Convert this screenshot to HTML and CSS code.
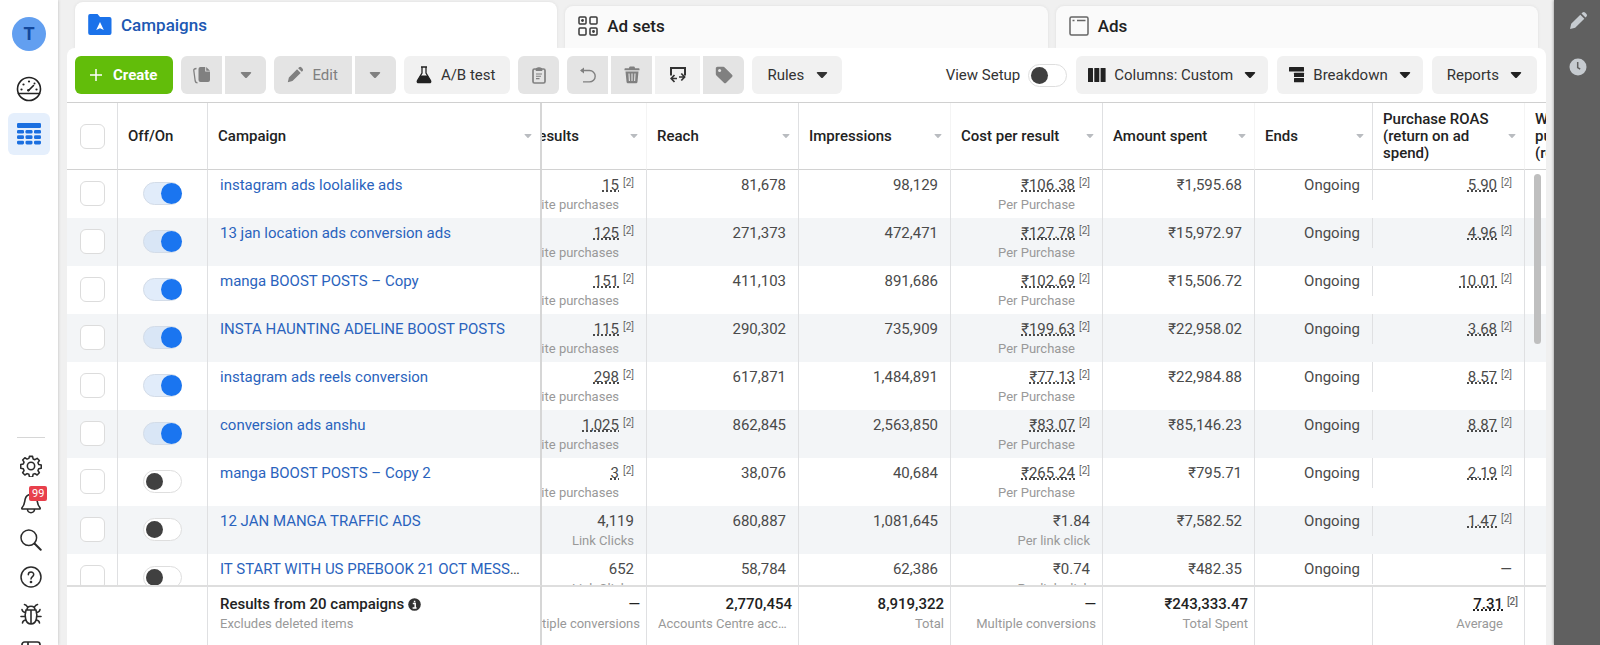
FILE: index.html
```html
<!DOCTYPE html>
<html lang="en">
<head>
<meta charset="utf-8">
<title>Campaigns</title>
<link rel="stylesheet" href="styles.css">
</head>
<body>
<svg class="sprite" aria-hidden="true">
  <symbol id="caret" viewBox="0 0 12 8"><path d="M1.6 1h8.8c.8 0 1.1.8.6 1.3L6.8 6.7c-.5.5-1.1.5-1.6 0L1 2.3C.5 1.8.8 1 1.6 1z" fill="currentColor"/></symbol>
  <symbol id="pencil" viewBox="0 0 20 20"><path d="M2 18l1.200-5.200L12.300 3.700l4 4L7.200 16.800zM13.500 2.500l1-1a1.800 1.800 0 0 1 2.500 0l1.500 1.500a1.800 1.800 0 0 1 0 2.500l-1 1z" fill="currentColor"/></symbol>
</svg>
<div class="app">
  <nav class="sidebar" aria-label="Account">
    <button class="avatar" type="button">T</button>
    <a class="side-link" href="#overview" aria-label="Account overview">
      <svg width="26" height="26" viewBox="0 0 26 26" fill="none" stroke="#222" stroke-width="1.600"><circle cx="13" cy="13" r="11.500"/><path d="M2.500 17.500h21M12.500 14.500l5-5" stroke-linecap="round"/><circle cx="12.300" cy="14.300" r="1.200" fill="#222" stroke="none"/><g fill="#222" stroke="none"><circle cx="5.500" cy="13.500" r="1.100"/><circle cx="7.500" cy="8.500" r="1.100"/><circle cx="13" cy="5.500" r="1.100"/><circle cx="18.500" cy="7.500" r="1"/><circle cx="20.500" cy="13.500" r="1.100"/></g></svg>
    </a>
    <a class="side-link current" href="#campaigns" aria-label="Campaigns">
      <svg width="26" height="24" viewBox="0 0 26 24" fill="#1b6fe0"><rect x="1" y="1" width="24" height="5" rx="1.200"/><g><rect x="1" y="8" width="7" height="3.500" rx="1.300"/><rect x="9.500" y="8" width="7" height="3.500" rx="1.300"/><rect x="18" y="8" width="7" height="3.500" rx="1.300"/><rect x="1" y="13.300" width="7" height="3.700" rx="1.300"/><rect x="9.500" y="13.300" width="7" height="3.700" rx="1.300"/><rect x="18" y="13.300" width="7" height="3.700" rx="1.300"/><rect x="1" y="18.700" width="7" height="3.700" rx="1.300"/><rect x="9.500" y="18.700" width="7" height="3.700" rx="1.300"/><rect x="18" y="18.700" width="7" height="3.700" rx="1.300"/></g></svg>
    </a>
    <div class="side-tools">
      <a class="tool" href="#settings" aria-label="Settings"><svg width="22" height="22" viewBox="0 0 24 24" fill="none" stroke="#2b2b2b" stroke-width="1.700" stroke-linejoin="round"><circle cx="12" cy="12" r="4"/><path d="M10.300 1.500h3.400l.6 2.800 2 .8 2.400-1.500 2.400 2.400-1.500 2.400.8 2 2.800.6v3.400l-2.800.6-.8 2 1.500 2.400-2.400 2.400-2.400-1.500-2 .8-.6 2.800h-3.400l-.6-2.800-2-.8-2.400 1.500-2.400-2.400 1.500-2.400-.8-2-2.800-.6V10.400l2.800-.6.8-2L2.900 5.400l2.400-2.400 2.400 1.500 2-.8z"/></svg></a>
      <a class="tool" href="#notifications" aria-label="Notifications"><svg width="22" height="22" viewBox="0 0 22 22" fill="none" stroke="#2b2b2b" stroke-width="1.600" stroke-linejoin="round"><path d="M2.500 17c-.6 0-.9-.7-.5-1.200C5 12.500 4.500 9.500 5.200 7 6 4 8 2.500 11 2.500S16 4 16.800 7c.7 2.500.2 5.500 3.200 8.800.4.500.1 1.200-.5 1.200zM7.500 17.500a3.500 3.200 0 0 0 7 0"/></svg><span class="count">99</span></a>
      <a class="tool" href="#search" aria-label="Search"><svg width="22" height="22" viewBox="0 0 22 22" fill="none" stroke="#2b2b2b" stroke-linecap="round"><circle cx="8.800" cy="8.800" r="7.800" stroke-width="1.500"/><path d="M14.500 14.500l6.200 6.200" stroke-width="2"/></svg></a>
      <a class="tool" href="#help" aria-label="Help"><svg width="22" height="22" viewBox="0 0 22 22" fill="none" stroke="#2b2b2b" stroke-width="1.500" stroke-linecap="round"><circle cx="11" cy="11" r="10"/><path d="M8.300 8.800c0-3.700 5.600-3.500 5.400-.2-.1 2-2.700 2-2.700 4.400"/><circle cx="11" cy="16" r=".6" fill="#2b2b2b"/></svg></a>
      <a class="tool" href="#bug" aria-label="Report a problem"><svg width="22" height="22" viewBox="0 0 22 22" fill="none" stroke="#2b2b2b" stroke-width="1.600" stroke-linecap="round"><path d="M6 7h10c1.600 5.500 1 14-5 14S4.400 12.500 6 7zM11 7v14M7 7c0-5 8-5 8 0M5.200 9.500C3.500 9.300 2.300 8.500 2 6.500M16.800 9.500c1.700-.2 2.900-1 3.200-3M4.800 13.500H1M17.200 13.500H21M5.500 17c-1.800.3-2.800 1.200-3 3M16.500 17c1.800.3 2.800 1.200 3 3M7.500 4C6.800 2.500 6 1.800 4.500 1.500M14.500 4c.7-1.500 1.500-2.200 3-2.500"/></svg></a>
      <a class="tool" href="#panel" aria-label="Toggle panel"><svg width="20" height="20" viewBox="0 0 20 20" fill="none" stroke="#2b2b2b" stroke-width="1.700"><rect x="1" y="1" width="18" height="18" rx="2.500"/><path d="M7 1v18M7 5.500h12"/></svg></a>
    </div>
  </nav>

  <main class="main">
    <div class="tabs" role="tablist">
      <button class="tab selected" type="button" role="tab" aria-selected="true"><svg width="24" height="22" viewBox="0 0 24 22"><path d="M2 0h7.500l2.500 3h9.500A2 2 0 0 1 23.500 5v14a2 2 0 0 1-2 2H2.200a2 2 0 0 1-2-2V2A2 2 0 0 1 2 0z" fill="#1b72ea"/><path d="M12 8l3.800 8L12 14.300 8.200 16z" fill="#fff"/></svg>Campaigns</button>
      <button class="tab" type="button" role="tab" aria-selected="false"><svg width="20" height="20" viewBox="0 0 20 20" fill="none" stroke="#3a3a3a" stroke-width="1.500"><rect x="1" y="1" width="7" height="7" rx="1"/><rect x="12" y="1" width="7" height="7" rx="1"/><rect x="1" y="12" width="7" height="7" rx="1"/><rect x="12" y="12" width="7" height="7" rx="1"/><circle cx="4.500" cy="4.500" r=".7"/><circle cx="15.500" cy="15.500" r=".7"/></svg>Ad sets</button>
      <button class="tab" type="button" role="tab" aria-selected="false"><svg width="20" height="20" viewBox="0 0 20 20" fill="none" stroke="#666" stroke-width="1.500"><rect x="1" y="1" width="18" height="18" rx="1.500"/><path d="M3.500 4.500h2M8 4.500h8.500"/></svg>Ads</button>
    </div>

    <section class="panel">
      <div class="toolbar">
        <button class="btn create" type="button"><svg width="14" height="14" viewBox="0 0 14 14" stroke="#fff" stroke-width="1.500"><path d="M7 1v12M1 7h12"/></svg>Create</button>
        <div class="group">
          <button class="btn icon off" type="button" aria-label="Duplicate"><svg width="20" height="18" viewBox="0 0 20 18"><path d="M8.500 1h4.700v4.500H18V14a2 2 0 0 1-2 2H8.500a2 2 0 0 1-2-2V3a2 2 0 0 1 2-2z" fill="currentColor"/><path d="M14.200 1L18 4.700h-3.800z" fill="currentColor"/><path d="M4.500 2.500C2.500 2.700 1.600 3.300 1.800 4.500L3.200 15c.2 1 .8 1.700 2.300 1.900" fill="none" stroke="currentColor" stroke-width="1.300"/></svg></button>
          <button class="btn icon off" type="button" aria-label="Duplicate options"><svg width="12" height="8"><use href="#caret"/></svg></button>
        </div>
        <div class="group">
          <button class="btn edit off" type="button"><svg width="18" height="18"><use href="#pencil"/></svg>Edit</button>
          <button class="btn icon off" type="button" aria-label="Edit options"><svg width="12" height="8"><use href="#caret"/></svg></button>
        </div>
        <button class="btn test" type="button"><svg width="16" height="18" viewBox="0 0 16 18"><path d="M5 1h6M6 1v6L1.500 14.500c-.7 1.300 0 2.200 1.200 2.200h10.600c1.200 0 1.900-.9 1.200-2.200L10 7V1" fill="none" stroke="#222" stroke-width="1.300"/><path d="M4.500 9.500h7l3.300 5.200c.6 1.200 0 2-1.200 2H2.400c-1.200 0-1.800-.8-1.200-2z" fill="#222"/></svg>A/B test</button>
        <button class="btn icon off" type="button" aria-label="Paste"><svg width="14" height="18" viewBox="0 0 14 18" fill="none" stroke="currentColor"><rect x="1" y="3" width="12" height="14" rx="1.500" stroke-width="1.700"/><path d="M4 3.500l.8-1.500h1.400a.9.900 0 0 1 1.600 0h1.400l.8 1.500v1H4z" fill="currentColor" stroke-width="1"/><path d="M4 8h6M4 10.300h5M4 12.600h3.500" stroke-width="1.100"/></svg></button>
        <div class="group">
          <button class="btn icon off" type="button" aria-label="Undo"><svg width="18" height="18" viewBox="0 0 18 18" fill="none" stroke="currentColor" stroke-width="1.400"><path d="M2 4.500h8.500a5.700 5.700 0 0 1 0 11.400H4"/><path d="M5 1.500v6l-4-3z" fill="currentColor" stroke="none"/></svg></button>
          <button class="btn icon off" type="button" aria-label="Delete"><svg width="16" height="18" viewBox="0 0 16 18" fill="currentColor"><path d="M5 2.200c0-1 .6-1.700 1.500-1.700h3c.9 0 1.500.7 1.500 1.700h3.500c.6 0 1 .4 1 1v1H.5v-1c0-.6.400-1 1-1zM1.500 5.500h13l-1 10.200c-.1 1-.8 1.600-1.800 1.600H4.300c-1 0-1.700-.6-1.800-1.600z"/><path d="M5 7.500l.4 7.500M8 7.500V15M11 7.500l-.4 7.500" stroke="#e4e4e4" stroke-width="1.100"/></svg></button>
          <button class="btn swap" type="button" aria-label="Export and import"><svg width="18" height="18" viewBox="0 0 18 18" fill="none" stroke="#333"><path d="M2 9.500V2h14v7.500" stroke-width="2"/><path d="M8 12.500H2.500M5.500 9l-3.300 3.500L5.500 16M10 11h5.500M12.300 7.500l3.300 3.500-3.300 3.500" stroke-width="1.700"/></svg></button>
          <button class="btn icon off" type="button" aria-label="Tag"><svg width="18" height="18" viewBox="0 0 18 18"><path d="M.8 2.500C.8 1.500 1.500.8 2.500.8h5.800c.6 0 1 .2 1.400.6l7.300 7.300c.7.700.7 1.600 0 2.300l-5.800 5.800c-.7.700-1.600.7-2.300 0L1.400 9.500c-.4-.4-.6-.8-.6-1.400z" fill="currentColor"/><circle cx="4.600" cy="4.600" r="1.500" fill="#e4e4e4"/></svg></button>
        </div>
        <button class="btn rules" type="button">Rules<svg width="12" height="8"><use href="#caret"/></svg></button>
        <div class="right">
          <label class="setup">View Setup<input class="switch" type="checkbox" role="switch"></label>
          <button class="btn" type="button"><svg width="18" height="14" viewBox="0 0 18 14" fill="#222"><rect x="0" width="5" height="14" rx=".6"/><rect x="6.300" width="5" height="14" rx=".6"/><rect x="12.600" width="5" height="14" rx=".6"/></svg>Columns: Custom<svg class="end" width="12" height="8"><use href="#caret"/></svg></button>
          <button class="btn" type="button"><svg width="16" height="16" viewBox="0 0 16 16" fill="#222"><rect y="0" width="15" height="4.500" rx=".5"/><rect x="5" y="5.700" width="10" height="4.200" rx=".5"/><rect x="5" y="11" width="10" height="4.200" rx=".5"/></svg>Breakdown<svg class="end" width="12" height="8"><use href="#caret"/></svg></button>
          <button class="btn reports" type="button">Reports<svg class="end" width="12" height="8"><use href="#caret"/></svg></button>
        </div>
      </div>

      <div class="grid-area">
        <div class="scroller">
          <table class="grid">
            <colgroup><col class="c-check"><col class="c-toggle"><col class="c-name"><col class="c-results"><col class="c-num"><col class="c-num"><col class="c-num"><col class="c-num"><col class="c-ends"><col class="c-num"><col></colgroup>
            <thead>
              <tr>
                <th class="check"><input class="tick" type="checkbox" aria-label="Select all"></th>
                <th><div class="head">Off/On</div></th>
                <th class="frozen"><div class="head">Campaign<svg width="8" height="6"><use href="#caret"/></svg></div></th>
                <th class="faint"><div class="head cut"><span>Results</span><svg width="8" height="6"><use href="#caret"/></svg></div></th>
                <th><div class="head">Reach<svg width="8" height="6"><use href="#caret"/></svg></div></th>
                <th class="faint"><div class="head">Impressions<svg width="8" height="6"><use href="#caret"/></svg></div></th>
                <th><div class="head">Cost per result<svg width="8" height="6"><use href="#caret"/></svg></div></th>
                <th class="faint"><div class="head">Amount spent<svg width="8" height="6"><use href="#caret"/></svg></div></th>
                <th><div class="head">Ends<svg width="8" height="6"><use href="#caret"/></svg></div></th>
                <th class="faint"><div class="head">Purchase ROAS (return on ad spend)<svg width="8" height="6"><use href="#caret"/></svg></div></th>
                <th class="last"><div class="head">Website<br>purchase ROAS<br>(return on ad</div></th>
              </tr>
            </thead>
            <tbody>
              <tr>
                <td class="check"><input class="tick" type="checkbox" aria-label="Select instagram ads loolalike ads"></td>
                <td class="toggle"><input class="switch" type="checkbox" role="switch" checked aria-label="instagram ads loolalike ads"></td>
                <td class="name frozen"><a href="#c1">instagram ads loolalike ads</a></td>
                <td class="noted"><div><u>15</u><sup>[2]</sup></div><small>Website purchases</small></td>
                <td>81,678</td><td>98,129</td>
                <td class="noted"><div><u>₹106.38</u><sup>[2]</sup></div><small>Per Purchase</small></td>
                <td>₹1,595.68</td><td class="ends">Ongoing</td>
                <td class="noted"><div><u>5.90</u><sup>[2]</sup></div></td><td class="last"></td>
              </tr>
              <tr>
                <td class="check"><input class="tick" type="checkbox" aria-label="Select 13 jan location ads conversion ads"></td>
                <td class="toggle"><input class="switch" type="checkbox" role="switch" checked aria-label="13 jan location ads conversion ads"></td>
                <td class="name frozen"><a href="#c2">13 jan location ads conversion ads</a></td>
                <td class="noted"><div><u>125</u><sup>[2]</sup></div><small>Website purchases</small></td>
                <td>271,373</td><td>472,471</td>
                <td class="noted"><div><u>₹127.78</u><sup>[2]</sup></div><small>Per Purchase</small></td>
                <td>₹15,972.97</td><td class="ends">Ongoing</td>
                <td class="noted"><div><u>4.96</u><sup>[2]</sup></div></td><td class="last"></td>
              </tr>
              <tr>
                <td class="check"><input class="tick" type="checkbox" aria-label="Select manga BOOST POSTS – Copy"></td>
                <td class="toggle"><input class="switch" type="checkbox" role="switch" checked aria-label="manga BOOST POSTS – Copy"></td>
                <td class="name frozen"><a href="#c3">manga BOOST POSTS – Copy</a></td>
                <td class="noted"><div><u>151</u><sup>[2]</sup></div><small>Website purchases</small></td>
                <td>411,103</td><td>891,686</td>
                <td class="noted"><div><u>₹102.69</u><sup>[2]</sup></div><small>Per Purchase</small></td>
                <td>₹15,506.72</td><td class="ends">Ongoing</td>
                <td class="noted"><div><u>10.01</u><sup>[2]</sup></div></td><td class="last"></td>
              </tr>
              <tr>
                <td class="check"><input class="tick" type="checkbox" aria-label="Select INSTA HAUNTING ADELINE BOOST POSTS"></td>
                <td class="toggle"><input class="switch" type="checkbox" role="switch" checked aria-label="INSTA HAUNTING ADELINE BOOST POSTS"></td>
                <td class="name frozen"><a href="#c4">INSTA HAUNTING ADELINE BOOST POSTS</a></td>
                <td class="noted"><div><u>115</u><sup>[2]</sup></div><small>Website purchases</small></td>
                <td>290,302</td><td>735,909</td>
                <td class="noted"><div><u>₹199.63</u><sup>[2]</sup></div><small>Per Purchase</small></td>
                <td>₹22,958.02</td><td class="ends">Ongoing</td>
                <td class="noted"><div><u>3.68</u><sup>[2]</sup></div></td><td class="last"></td>
              </tr>
              <tr>
                <td class="check"><input class="tick" type="checkbox" aria-label="Select instagram ads reels conversion"></td>
                <td class="toggle"><input class="switch" type="checkbox" role="switch" checked aria-label="instagram ads reels conversion"></td>
                <td class="name frozen"><a href="#c5">instagram ads reels conversion</a></td>
                <td class="noted"><div><u>298</u><sup>[2]</sup></div><small>Website purchases</small></td>
                <td>617,871</td><td>1,484,891</td>
                <td class="noted"><div><u>₹77.13</u><sup>[2]</sup></div><small>Per Purchase</small></td>
                <td>₹22,984.88</td><td class="ends">Ongoing</td>
                <td class="noted"><div><u>8.57</u><sup>[2]</sup></div></td><td class="last"></td>
              </tr>
              <tr>
                <td class="check"><input class="tick" type="checkbox" aria-label="Select conversion ads anshu"></td>
                <td class="toggle"><input class="switch" type="checkbox" role="switch" checked aria-label="conversion ads anshu"></td>
                <td class="name frozen"><a href="#c6">conversion ads anshu</a></td>
                <td class="noted"><div><u>1,025</u><sup>[2]</sup></div><small>Website purchases</small></td>
                <td>862,845</td><td>2,563,850</td>
                <td class="noted"><div><u>₹83.07</u><sup>[2]</sup></div><small>Per Purchase</small></td>
                <td>₹85,146.23</td><td class="ends">Ongoing</td>
                <td class="noted"><div><u>8.87</u><sup>[2]</sup></div></td><td class="last"></td>
              </tr>
              <tr>
                <td class="check"><input class="tick" type="checkbox" aria-label="Select manga BOOST POSTS – Copy 2"></td>
                <td class="toggle"><input class="switch" type="checkbox" role="switch" aria-label="manga BOOST POSTS – Copy 2"></td>
                <td class="name frozen"><a href="#c7">manga BOOST POSTS – Copy 2</a></td>
                <td class="noted"><div><u>3</u><sup>[2]</sup></div><small>Website purchases</small></td>
                <td>38,076</td><td>40,684</td>
                <td class="noted"><div><u>₹265.24</u><sup>[2]</sup></div><small>Per Purchase</small></td>
                <td>₹795.71</td><td class="ends">Ongoing</td>
                <td class="noted"><div><u>2.19</u><sup>[2]</sup></div></td><td class="last"></td>
              </tr>
              <tr>
                <td class="check"><input class="tick" type="checkbox" aria-label="Select 12 JAN MANGA TRAFFIC ADS"></td>
                <td class="toggle"><input class="switch" type="checkbox" role="switch" aria-label="12 JAN MANGA TRAFFIC ADS"></td>
                <td class="name frozen"><a href="#c8">12 JAN MANGA TRAFFIC ADS</a></td>
                <td><div>4,119</div><small>Link Clicks</small></td>
                <td>680,887</td><td>1,081,645</td>
                <td><div>₹1.84</div><small>Per link click</small></td>
                <td>₹7,582.52</td><td class="ends">Ongoing</td>
                <td class="noted"><div><u>1.47</u><sup>[2]</sup></div></td><td class="last"></td>
              </tr>
              <tr>
                <td class="check"><input class="tick" type="checkbox" aria-label="Select IT START WITH US PREBOOK 21 OCT"></td>
                <td class="toggle"><input class="switch" type="checkbox" role="switch" aria-label="IT START WITH US PREBOOK 21 OCT"></td>
                <td class="name frozen"><a href="#c9">IT START WITH US PREBOOK 21 OCT MESSAGES</a></td>
                <td><div>652</div><small>Link Clicks</small></td>
                <td>58,784</td><td>62,386</td>
                <td><div>₹0.74</div><small>Per link click</small></td>
                <td>₹482.35</td><td class="ends">Ongoing</td>
                <td>—</td><td class="last"></td>
              </tr>
            </tbody>
            <tfoot>
              <tr>
                <td colspan="2"></td>
                <td class="name frozen"><b>Results from 20 campaigns <svg width="13" height="13" viewBox="0 0 13 13"><circle cx="6.500" cy="6.500" r="6.300" fill="#333"/><path d="M4.800 5.600h2.400v4M4.600 9.900h4M6.600 2.700v1.600" stroke="#fff" stroke-width="1.500" fill="none"/></svg></b><small>Excludes deleted items</small></td>
                <td><b>—</b><small>Multiple conversions</small></td>
                <td><b>2,770,454</b><small class="clip">Accounts Centre accounts</small></td>
                <td><b>8,919,322</b><small>Total</small></td>
                <td><b>—</b><small>Multiple conversions</small></td>
                <td><b>₹243,333.47</b><small>Total Spent</small></td>
                <td></td>
                <td class="noted"><b><u>7.31</u><sup>[2]</sup></b><small>Average</small></td>
                <td class="last"></td>
              </tr>
            </tfoot>
          </table>
        </div>
        <div class="thumb"></div>
      </div>
    </section>
  </main>

  <aside class="rail">
    <button type="button" aria-label="Edit"><svg width="20" height="20"><use href="#pencil"/></svg></button>
    <button type="button" aria-label="History"><svg width="18" height="18" viewBox="0 0 18 18"><circle cx="9" cy="9" r="8.500" fill="currentColor"/><path d="M8.700 4v5.500l2.500 1.700" fill="none" stroke="#606060" stroke-width="1.500"/></svg></button>
  </aside>
</div>
</body>
</html>
```

FILE: styles.css
```css
* { box-sizing: border-box; }
body { margin: 0; font: 15px/20px Roboto, "Noto Sans", sans-serif; color: #4a4a4a; overflow: hidden; }
button { font: inherit; border: 0; padding: 0; color: inherit; background: none; }
a { text-decoration: none; }
svg { display: block; flex: none; }
.sprite { display: none; }
.app { display: flex; height: 100vh; background: #f0f0f0; }

.sidebar { width: 58px; background: #fff; display: flex; flex-direction: column; align-items: center; padding-top: 17px; flex: none; box-shadow: 0 0 3px #bbb; }
.avatar { width: 34px; height: 34px; border-radius: 50%; background: #629ff0; color: #12489c; font-size: 18px; font-weight: 700; flex: none; }
.side-link { width: 42px; height: 42px; margin-top: 17px; border-radius: 6px; display: flex; align-items: center; justify-content: center; flex: none; }
.side-link.current { margin-top: 3px; background: #e5effc; }
.side-tools { width: 28px; margin: auto 0 -24px 4px; padding-top: 9px; border-top: 1px solid #d6d6d6; flex: none; }
.tool { height: 37px; display: flex; align-items: center; justify-content: center; position: relative; }
.count { position: absolute; left: 12px; top: 2px; padding: 0 3px; border-radius: 2px; background: #e8404c; color: #fff; font-size: 11px; line-height: 15px; }

.main { flex: 1; min-width: 0; display: flex; flex-direction: column; padding: 2px 8px 0 9px; }
.tabs { display: flex; align-items: flex-end; gap: 8px; height: 46px; padding: 0 8px; flex: none; }
.tab { flex: 1; height: 42px; display: flex; align-items: center; gap: 9px; padding: 0 13px 2px; background: #fafafa; border-radius: 8px 8px 0 0; font-size: 17px; font-weight: 500; color: #222; box-shadow: 0 0 3px #ddd; }
.tab.selected { height: 46px; padding-bottom: 0; background: #fff; color: #2058b3; }

.panel { flex: 1; min-height: 0; display: flex; flex-direction: column; background: #fff; border-radius: 8px 8px 0 0; overflow: hidden; position: relative; }
.toolbar { display: flex; align-items: center; gap: 8px; padding: 8px 9px 8px 8px; border-bottom: 1px solid #d0d0d0; flex: none; color: #333; white-space: nowrap; }
.group { display: flex; gap: 3px; }
.btn { height: 38px; display: flex; align-items: center; gap: 8px; padding: 0 12px; border-radius: 6px; background: #f1f1f1; font-size: 15px; }
.btn .end { margin-left: 3px; color: #222; }
.icon { width: 41px; padding: 0; justify-content: center; }
.off { background: #e4e4e4; color: #808080; }
.group .btn { border-radius: 0; }
.group .btn:first-child { border-radius: 6px 0 0 6px; }
.group .btn:last-child { border-radius: 0 6px 6px 0; }
.create { gap: 10px; padding: 0 16px 0 14px; background: #62bd0a; color: #fff; font-weight: 700; }
.edit { padding: 0 14px 0 12px; }
.test { gap: 9px; padding: 0 15px 0 12px; }
.swap { width: 45px; padding: 0; justify-content: center; }
.rules { gap: 12px; padding: 0 14px 0 15px; }
.reports { padding: 0 15px; }
.right { display: flex; align-items: center; gap: 9px; margin-left: auto; }
.setup { display: flex; align-items: center; gap: 8px; }

.switch { appearance: none; position: relative; display: block; width: 39px; height: 23px; margin: 0; border: 1px solid #dedede; border-radius: 12px; background: #fff; }
.switch::before { content: ""; position: absolute; left: 2px; top: 2px; width: 17px; height: 17px; border-radius: 50%; background: #404040; }
.switch:checked { background: #e1ecfa; border-color: #d3dce8; }
.switch:checked::before { left: 17px; top: 0; width: 21px; height: 21px; background: #1a75f0; }
.tick { appearance: none; display: block; width: 25px; height: 25px; margin: 0 auto; border: 1px solid #dcdcdc; border-radius: 6px; background: #fff; }

.grid-area { flex: 1; min-height: 0; position: relative; }
.scroller { height: 100%; overflow: auto; scrollbar-width: none; }
.thumb { position: absolute; right: 5px; top: 71px; width: 7px; height: 170px; border-radius: 4px; background: #bfbfbf; }
.grid { width: 100%; table-layout: fixed; border-spacing: 0; }
.c-check { width: 51px; }
.c-toggle { width: 90px; }
.c-name { width: 334px; }
.c-results { width: 105px; }
.c-num { width: 152px; }
.c-ends { width: 118px; }

th, td { padding: 0; border-right: 1px solid #dfe0e2; overflow: hidden; }
th { height: 67px; background: #fff; border-bottom: 1px solid #d2d2d2; font-weight: 500; font-size: 15px; line-height: 17px; color: #222; text-align: left; }
thead { position: sticky; top: 0; z-index: 2; }
th.faint { border-right-color: #f4f4f4; }
.head { display: flex; align-items: center; justify-content: space-between; padding: 0 8px 0 10px; }
.head svg { color: #b9bcc0; }
.cut { justify-content: flex-end; gap: 51px; }
.last { border-right: 0; white-space: nowrap; }
td { height: 48px; padding: 5px 12px 0; text-align: right; vertical-align: top; white-space: nowrap; }
tbody tr:nth-child(even) { background: #f3f5f7; }
.check, td.toggle { vertical-align: middle; padding: 0; }
td.check, td.toggle { padding-bottom: 2px; }
td.toggle .switch { margin: 0 auto; }
tbody tr:nth-child(even) .switch:checked { background: #d9e6f6; }
td.name { text-align: left; text-overflow: ellipsis; padding-right: 16px; }
td.name a { color: #2a63bd; }
th.frozen, td.frozen { border-right: 2px solid #d6d6d6; }
td.ends { border-right-color: transparent; background: linear-gradient(#dfe0e2, #dfe0e2) right top / 1px 30px no-repeat border-box; }
td > div, small, b { display: flex; justify-content: flex-end; }
td.name small, td.name b { justify-content: flex-start; gap: 4px; align-items: center; }
small { font-size: 13px; line-height: 20px; color: #999; }
u { text-decoration: underline dotted 2px; text-underline-offset: 0; text-decoration-skip-ink: none; }
sup { width: 15px; font-size: 10px; line-height: 16px; color: #666; }
.noted small { margin-right: 15px; }

tfoot { position: sticky; bottom: 0; z-index: 2; }
tfoot td { height: 60px; padding: 7px 6px 0; background: #fff; border-top: 2px solid #dedede; }
tfoot td.name { padding-left: 12px; }
b { font-weight: 500; color: #222; }
.clip { display: block; margin: 0 4px 0 5px; overflow: hidden; text-overflow: ellipsis; }

.rail { width: 46px; display: flex; flex-direction: column; align-items: center; gap: 27px; padding: 11px 0 0 1px; background: #606060; color: #c6cbd0; box-shadow: 0 0 3px #888; flex: none; }
```
